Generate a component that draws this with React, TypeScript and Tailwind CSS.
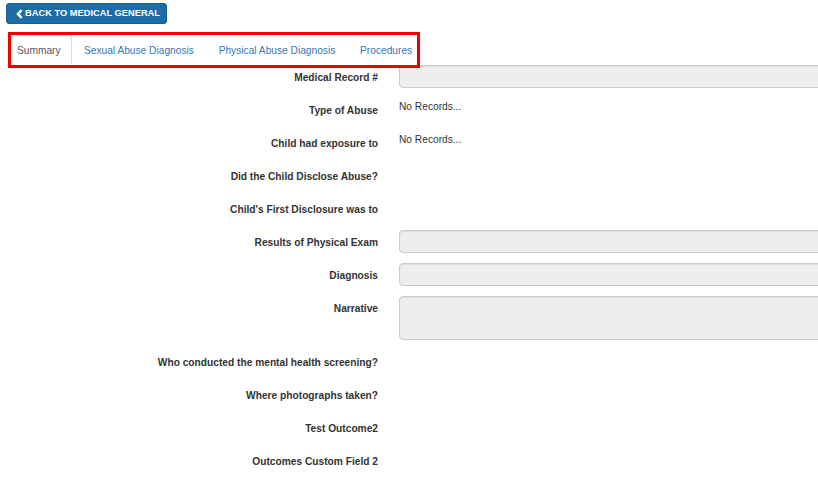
import React from "react";

type Row = {
  label: string;
  kind: "input" | "text" | "none" | "area";
  value?: string;
};

const rows: Row[] = [
  { label: "Medical Record #", kind: "input" },
  { label: "Type of Abuse", kind: "text", value: "No Records..." },
  { label: "Child had exposure to", kind: "text", value: "No Records..." },
  { label: "Did the Child Disclose Abuse?", kind: "none" },
  { label: "Child's First Disclosure was to", kind: "none" },
  { label: "Results of Physical Exam", kind: "input" },
  { label: "Diagnosis", kind: "input" },
  { label: "Narrative", kind: "area" },
  { label: "Who conducted the mental health screening?", kind: "none" },
  { label: "Where photographs taken?", kind: "none" },
  { label: "Test Outcome2", kind: "none" },
  { label: "Outcomes Custom Field 2", kind: "none" },
];

const tabs = ["Sexual Abuse Diagnosis", "Physical Abuse Diagnosis", "Procedures"];

const FieldRow = ({ label, kind, value }: Row) => {
  return (
    <div className="flex mb-[10px]">
      <div className="h-[23px] w-[378px] shrink-0 text-right font-bold text-[10.2px] leading-[25px] text-[#333]">
        {label}
      </div>
      <div className="ml-[21px] w-[440px] shrink-0">
        {kind === "input" && (
          <div className="h-[23px] rounded-[4px] border border-[#ccc] bg-[#eee] shadow-[inset_0_1px_1px_rgba(0,0,0,0.075)]" />
        )}
        {kind === "area" && (
          <div className="h-[44px] rounded-[4px] border border-[#ccc] bg-[#eee] shadow-[inset_0_1px_1px_rgba(0,0,0,0.075)]" />
        )}
        {kind === "text" && (
          <div className="h-[23px] text-[10.2px] leading-[17px] text-[#333]">
            {value}
          </div>
        )}
        {kind === "none" && <div className="h-[23px]" />}
      </div>
    </div>
  );
};

const App = () => {
  return (
    <div className="relative h-[482px] w-[818px] overflow-hidden bg-white pt-[3px] font-['Liberation_Sans',Arial,sans-serif]">
      <button className="ml-[6px] flex h-[21px] w-[161px] items-center rounded-[3px] border border-[#17608f] bg-[#1c6da6] pl-[9px] text-[9.3px] font-bold text-white">
        <svg width="7" height="10" viewBox="0 0 7 10" className="mr-[2px]">
          <polyline
            points="5.6,1 2,5 5.6,9"
            fill="none"
            stroke="white"
            strokeWidth="2.6"
          />
        </svg>
        BACK TO MEDICAL GENERAL
      </button>

      <div className="relative mt-[11px] flex h-[30px] pl-[10px]">
        <div className="h-[29px] rounded-t-[3px] border border-b-0 border-[#ddd] bg-white pl-[6px] pr-[10px] text-[10.2px] leading-[29px] text-[#555]">
          Summary
        </div>
        {tabs.map((t) => (
          <div
            key={t}
            className="h-[29px] px-[12.4px] text-[10.2px] leading-[31px] text-[#3a78b3]"
          >
            {t}
          </div>
        ))}
        <div className="pointer-events-none absolute left-[8px] top-[-3px] h-[36px] w-[412px] border-[3px] border-[#ee0000]" />
      </div>

      <div className="flex flex-col">
        {rows.map((r) => (
          <FieldRow key={r.label} {...r} />
        ))}
      </div>
    </div>
  );
};

export default App;
